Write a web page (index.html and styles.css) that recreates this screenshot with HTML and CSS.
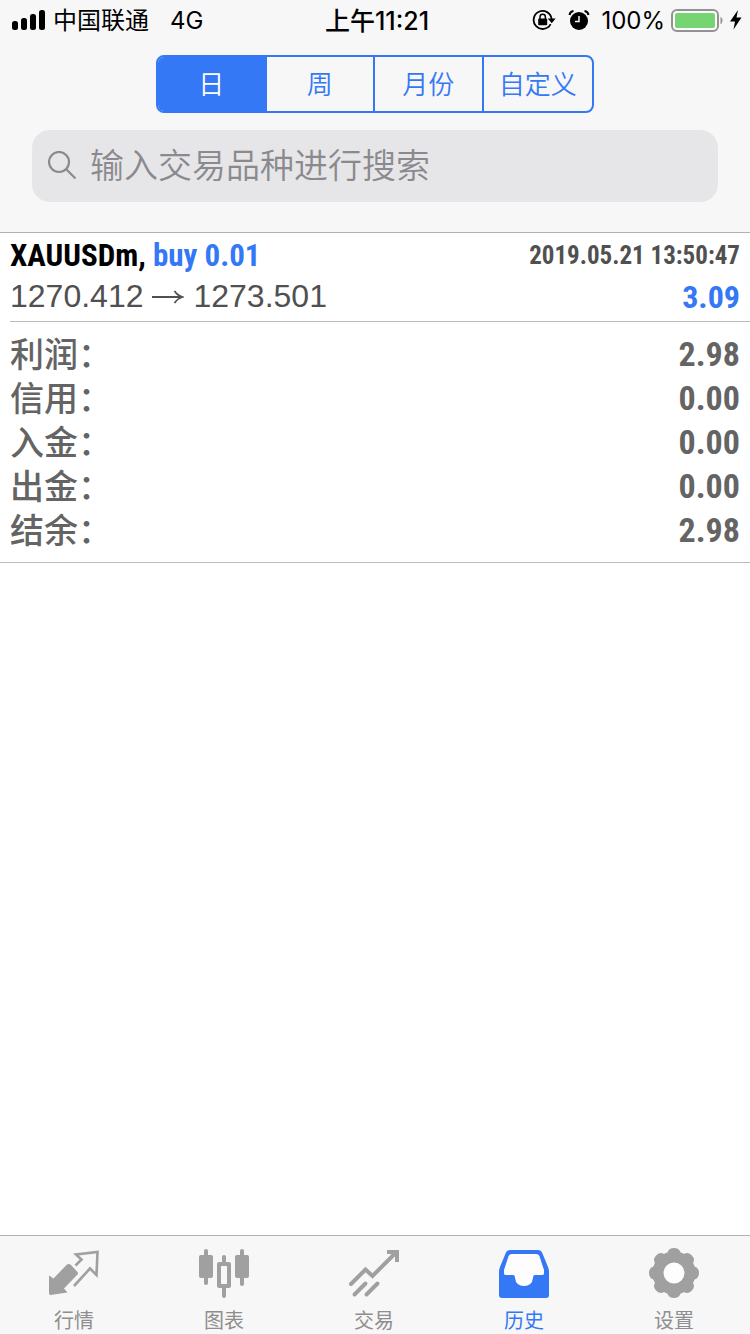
FILE: index.html
```html
<!DOCTYPE html>
<html lang="zh-CN">
<head>
<meta charset="utf-8">
<meta name="viewport" content="width=device-width, initial-scale=1">
<title>历史</title>
<link rel="stylesheet" href="styles.css">
</head>
<body>
<header class="header">
  <div class="status">
    <div class="status-side">
      <svg class="signal" width="34" height="22" viewBox="0 0 34 22" aria-hidden="true">
        <rect x="0" y="11" width="6" height="9" rx="2.5"/>
        <rect x="9" y="8" width="6" height="12" rx="2.5"/>
        <rect x="18" y="4" width="6" height="16" rx="2.5"/>
        <rect x="27" y="0" width="6" height="20" rx="2.5"/>
      </svg>
      <span class="carrier">中国联通</span>
      <span>4G</span>
    </div>
    <time class="clock">上午11:21</time>
    <div class="status-side status-right">
      <svg width="24" height="22" viewBox="0 0 24 22" aria-hidden="true">
        <path d="M18.6 14.2A9 9 0 1 1 19.6 9" fill="none" stroke="#000" stroke-width="1.8"/>
        <path d="M15.8 8.600H23.6L19.7 13.200Z"/>
        <rect x="6.2" y="8.600" width="9" height="6.6" rx="1"/>
        <path d="M8 9V7a2.7 2.7 0 0 1 5.400 0v2" fill="none" stroke="#000" stroke-width="1.5"/>
      </svg>
      <svg class="alarm" width="22" height="22" viewBox="0 0 22 22" aria-hidden="true">
        <circle cx="11" cy="11" r="9"/>
        <path d="M11 6V11.500H7" fill="none" stroke="#f7f7f7" stroke-width="1.500"/>
        <path d="M1.500 5Q2 1.500 5.500 1M20.500 5Q20 1.500 16.500 1" fill="none" stroke="#000" stroke-width="2"/>
      </svg>
      <span class="percent">100%</span>
      <svg class="battery" width="53" height="24" viewBox="0 0 53 24" aria-hidden="true">
        <rect x="1" y="1" width="46" height="21" rx="5" fill="#fff" stroke="#929294" stroke-width="2"/>
        <rect x="4" y="4" width="40" height="15" rx="2" fill="#74d572"/>
        <path d="M49.500 7.500q4 4 0 8z" fill="#929294"/>
      </svg>
      <svg class="bolt" width="12" height="22" viewBox="0 0 12 22" aria-hidden="true"><path d="M8 0L0 11.500H5L3.500 19.500L11.500 7.500H6.500Z"/></svg>
    </div>
  </div>
  <div class="segments">
    <button type="button" class="segment segment-on" aria-pressed="true">日</button>
    <button type="button" class="segment">周</button>
    <button type="button" class="segment">月份</button>
    <button type="button" class="segment">自定义</button>
  </div>
  <label class="search">
    <svg width="30" height="30" viewBox="0 0 30 30" fill="none" stroke="#8a8a8e" stroke-width="2.200" aria-hidden="true">
      <circle cx="11" cy="11" r="10"/><path d="M18.500 18.500L27.500 27.500"/>
    </svg>
    <input class="search-input" type="search" placeholder="输入交易品种进行搜索" aria-label="输入交易品种进行搜索">
  </label>
</header>
<main class="content">
  <section class="deal">
    <div class="deal-row">
      <span class="symbol">XAUUSDm, <span class="blue">buy 0.01</span></span>
      <time class="date">2019.05.21 13:50:47</time>
    </div>
    <div class="deal-row">
      <span class="prices">1270.412
        <svg width="32" height="16" viewBox="0 0 32 16" fill="none" stroke="#505050" stroke-width="1.800" aria-label="→"><path d="M0 8H30M22.500 2Q25.500 6.500 30.500 8Q25.500 9.500 22.500 14"/></svg>
        1273.501</span>
      <span class="profit blue">3.09</span>
    </div>
  </section>
  <dl class="summary">
    <div class="sum-row"><dt>利润：</dt><dd>2.98</dd></div>
    <div class="sum-row"><dt>信用：</dt><dd>0.00</dd></div>
    <div class="sum-row"><dt>入金：</dt><dd>0.00</dd></div>
    <div class="sum-row"><dt>出金：</dt><dd>0.00</dd></div>
    <div class="sum-row"><dt>结余：</dt><dd>2.98</dd></div>
  </dl>
</main>
<nav class="tabs">
  <a class="tab" href="#quotes">
    <svg width="50" height="50" viewBox="0 0 50 50" aria-hidden="true">
      <path d="M0 27.500L4.500 30.500L17 17.500Q19.500 15 22 17L28 23.500Q30 25 28 27L15 40.500L18.500 44.500L1.500 47Q0 47 0 45Z" fill="currentColor"/>
      <path d="M26.500 17.500L32.500 11.500L27 6.500L48.500 4L47.500 27L41 20.500L25 38" fill="none" stroke="currentColor" stroke-width="2.600"/>
    </svg>
    <span>行情</span></a>
  <a class="tab" href="#charts">
    <svg width="50" height="50" viewBox="0 0 50 50" fill="currentColor" aria-hidden="true">
      <rect x="0" y="7" width="14" height="23" rx="2"/><rect x="5" y="1" width="4" height="36" rx="2"/>
      <rect x="36" y="7" width="14" height="23" rx="2"/><rect x="41" y="1" width="4" height="37" rx="2"/>
      <path fill-rule="evenodd" d="M20 14h10q2 0 2 2v22q0 2-2 2H20q-2 0-2-2V16q0-2 2-2zM22 18v18h6V18z"/>
      <rect x="23" y="7" width="4" height="10" rx="2"/><rect x="23" y="38" width="4" height="12" rx="2"/>
    </svg>
    <span>图表</span></a>
  <a class="tab" href="#trade">
    <svg width="50" height="50" viewBox="0 0 50 50" fill="none" stroke="currentColor" stroke-width="4" stroke-linecap="round" aria-hidden="true">
      <path d="M2 36L16.500 21.500L23.500 28L46.500 5"/><path d="M38 4H48V14" stroke-linecap="butt"/>
      <path d="M5.500 46.500L16.500 35.500M17.500 46.500L28.500 35.500"/>
    </svg>
    <span>交易</span></a>
  <a class="tab tab-on" href="#history" aria-current="page">
    <svg width="50" height="50" viewBox="0 0 50 50" aria-hidden="true">
      <path fill="currentColor" fill-rule="evenodd" d="M11 2H39Q42 2 43.300 5L49 19Q50 21.500 50 24V47Q50 50 47 50H3Q0 50 0 47V24Q0 21.500 1 19L6.700 5Q8 2 11 2Z"/>
      <path fill="#fdfdfd" d="M13 6Q10.500 6 9.600 8L5 22V25.500Q5 27 7 27H14Q16 27 16 30Q17 38 25 38Q33 38 34 30Q34 27 36 27H43Q45 27 45 25.500V22L40.400 8Q39.500 6 37 6Z"/>
    </svg>
    <span>历史</span></a>
  <a class="tab" href="#settings">
    <svg width="50" height="50" viewBox="0 0 50 50" aria-hidden="true">
      <g fill="currentColor">
        <path id="tooth" d="M14 9Q17.500 7.500 18.700 4Q20 0 25 0Q30 0 31.300 4Q32.500 7.500 36 9V16H14Z"/>
        <use href="#tooth" transform="rotate(45 25 25)"/><use href="#tooth" transform="rotate(90 25 25)"/>
        <use href="#tooth" transform="rotate(135 25 25)"/><use href="#tooth" transform="rotate(180 25 25)"/>
        <use href="#tooth" transform="rotate(225 25 25)"/><use href="#tooth" transform="rotate(270 25 25)"/>
        <use href="#tooth" transform="rotate(315 25 25)"/>
      </g>
      <circle cx="25" cy="25" r="16" fill="#fdfdfd" stroke="currentColor" stroke-width="11"/>
    </svg>
    <span>设置</span></a>
</nav>
</body>
</html>
```
FILE: styles.css
```css
* { box-sizing: border-box; }

body {
  margin: 0;
  min-height: 100vh;
  display: flex;
  flex-direction: column;
  background: #fff;
  color: #000;
  font-family: Inter, "Noto Sans CJK SC", sans-serif;
}

svg { display: block; flex: none; }

.header {
  background: #f7f7f7;
  border-bottom: 1px solid #b2b2b2;
  padding-bottom: 30px;
}

.status {
  display: grid;
  grid-template-columns: 1fr auto 1fr;
  align-items: center;
  height: 40px;
  padding: 0 8px 0 12px;
  font-size: 24px;
  line-height: 42px;
}
.status-side { display: flex; align-items: center; white-space: nowrap; }
.signal { margin-right: 7px; }
.carrier { margin-right: 21px; }
.status-right { justify-content: flex-end; }
.alarm { margin-left: 12px; }
.percent { margin: 0 6px 0 11px; }
.battery { margin-right: 6px; }
.clock { font-weight: 500; font-size: 25px; }

.segments {
  display: grid;
  grid-template-columns: repeat(4, 1fr);
  width: 438px;
  height: 58px;
  margin: 15px auto 17px;
  border: 2px solid #3478f6;
  border-radius: 8px;
  overflow: hidden;
}
.segment {
  border: 0;
  border-right: 2px solid #3478f6;
  padding: 0 0 3px;
  background: none;
  color: #3478f6;
  font: 350 26px "Liberation Sans", "Noto Sans CJK SC", sans-serif;
}
.segment:last-child { border-right: 0; }
.segment-on { background: #3478f6; color: #fff; }

.search {
  display: flex;
  align-items: center;
  gap: 12px;
  height: 72px;
  margin: 0 32px;
  padding: 0 16px;
  border-radius: 18px;
  background: #e6e6e8;
}
.search-input {
  flex: 1;
  min-width: 0;
  border: 0;
  padding: 0;
  outline: 0;
  background: none;
  font: 350 34px "Liberation Sans", "Noto Sans CJK SC", sans-serif;
}
.search-input::placeholder { color: #8a8a8e; opacity: 1; }

.content { flex: 1; }

.deal {
  margin-left: 10px;
  padding: 2px 10px 4px 0;
  border-bottom: 1px solid #bcbcbc;
}
.deal-row {
  display: flex;
  justify-content: space-between;
  align-items: center;
  height: 41px;
}
.symbol, .date, .profit, .sum-row dd {
  font-family: "Liberation Sans Narrow", "Roboto Condensed", "Liberation Sans", sans-serif;
  font-weight: 700;
}
.symbol { font-size: 31px; }
.date { font-size: 25px; color: #505050; }
.blue { color: #3478f6; }
.prices {
  display: flex;
  align-items: center;
  gap: 9px;
  font: 32px "Liberation Sans", sans-serif;
  color: #505050;
}
.profit { font-size: 32px; }

.summary {
  margin: 0;
  padding: 10px;
  border-bottom: 1px solid #bcbcbc;
  color: #646464;
}
.sum-row {
  display: flex;
  justify-content: space-between;
  height: 44px;
  line-height: 44px;
  font-size: 34px;
}
.sum-row dt {
  font-family: "Liberation Sans", "Noto Sans CJK SC", sans-serif;
  font-weight: 500;
  line-height: 46px;
}
.sum-row dd { margin: 0; }

.tabs {
  display: grid;
  grid-template-columns: repeat(5, 1fr);
  height: 99px;
  border-top: 1px solid #b2b2b2;
  background: #f7f7f7;
}
.tab {
  display: flex;
  flex-direction: column;
  align-items: center;
  gap: 6px;
  padding: 12px 2px 0 0;
  color: #a0a0a0;
  font: 20px/32px "Noto Sans CJK SC", sans-serif;
  text-decoration: none;
}
.tab span { color: #8e8e8e; }
.tab-on, .tab-on span { color: #3478f6; }
```
